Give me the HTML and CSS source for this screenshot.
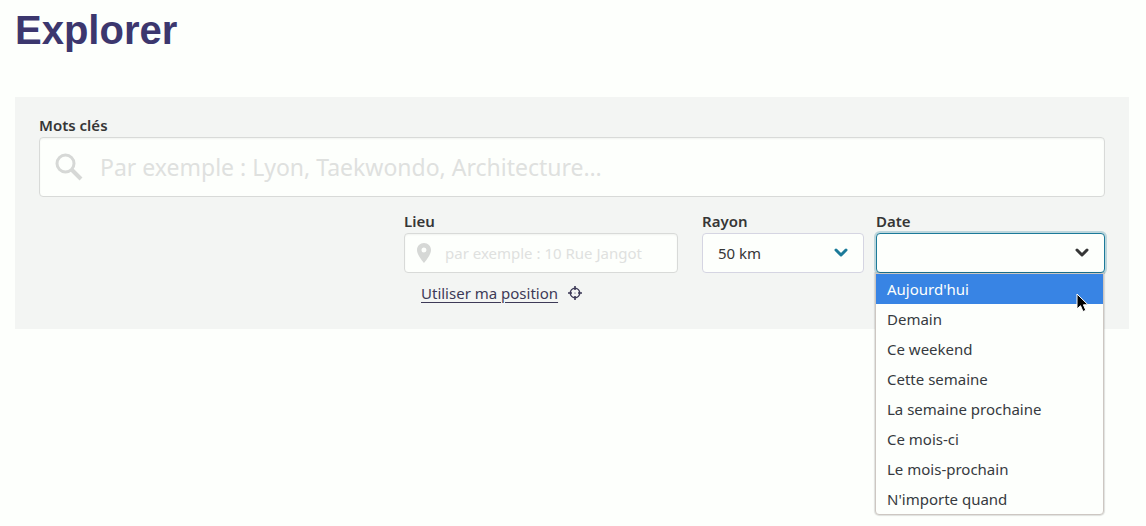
FILE: index.html
```html
<!DOCTYPE html>
<html lang="fr">
<head>
    <meta charset="UTF-8">
    <meta name="viewport" content="width=device-width, initial-scale=1.0">
    <title>Explorer</title>
    <link rel="stylesheet" href="styles.css">
</head>
<body>
    <main class="page">
        <h1 class="page-title">Explorer</h1>

        <form class="search-panel">
            <div class="field">
                <label for="keywords">Mots clés</label>
                <div class="control control-large">
                    <svg class="control-icon" viewBox="0 0 28 28" width="28" height="28" aria-hidden="true">
                        <circle cx="10.500" cy="10.500" r="8.500" fill="none" stroke="currentColor" stroke-width="3"/>
                        <path d="M16.500 16.500L26 26" fill="none" stroke="currentColor" stroke-width="4"/>
                    </svg>
                    <input type="search" id="keywords" placeholder="Par exemple : Lyon, Taekwondo, Architecture…">
                </div>
            </div>

            <div class="filters">
                <div class="field field-place">
                    <label for="place">Lieu</label>
                    <div class="control">
                        <svg class="control-icon" viewBox="0 0 14 20" width="14" height="20" aria-hidden="true">
                            <path fill="currentColor" fill-rule="evenodd" d="M7 0C3.100 0 0 3.100 0 7c0 5.200 7 13 7 13s7-7.800 7-13c0-3.900-3.100-7-7-7zm0 9.500a2.500 2.500 0 1 1 0-5 2.500 2.500 0 0 1 0 5z"/>
                        </svg>
                        <input type="text" id="place" placeholder="par exemple : 10 Rue Jangot">
                    </div>
                    <button type="button" class="locate-btn">
                        <span class="locate-text">Utiliser ma position</span>
                        <svg viewBox="0 0 14 14" width="14" height="14" aria-hidden="true">
                            <circle cx="7" cy="7" r="4.700" fill="none" stroke="currentColor" stroke-width="1.500"/>
                            <path d="M7 0v4M7 10v4M0 7h4M10 7h4" stroke="currentColor" stroke-width="1.600"/>
                            <circle cx="7" cy="7" r=".6" fill="currentColor"/>
                        </svg>
                    </button>
                </div>

                <div class="field field-radius">
                    <label for="radius">Rayon</label>
                    <div class="select-wrap">
                        <select id="radius">
                            <option>50 km</option>
                        </select>
                        <svg class="chevron" viewBox="0 0 14 10" width="14" height="10" aria-hidden="true">
                            <path d="M2 2l5 5 5-5" fill="none" stroke="currentColor" stroke-width="3" stroke-linecap="round" stroke-linejoin="round"/>
                        </svg>
                    </div>
                </div>

                <div class="field field-date">
                    <label for="date">Date</label>
                    <div class="select-wrap is-open">
                        <select id="date">
                            <option value=""></option>
                        </select>
                        <svg class="chevron" viewBox="0 0 14 10" width="14" height="10" aria-hidden="true">
                            <path d="M2 2l5 5 5-5" fill="none" stroke="currentColor" stroke-width="3" stroke-linecap="round" stroke-linejoin="round"/>
                        </svg>
                        <ul class="options" role="listbox">
                            <li class="option active" role="option" aria-selected="true">Aujourd'hui
                                <svg class="cursor" viewBox="0 0 13 20" width="13" height="20" aria-hidden="true">
                                    <path d="M1 1v15l3.500-3.300L7 18.500l2.800-1.200L7.400 11.800H12z" fill="#000" stroke="#fff"/>
                                </svg>
                            </li>
                            <li class="option" role="option">Demain</li>
                            <li class="option" role="option">Ce weekend</li>
                            <li class="option" role="option">Cette semaine</li>
                            <li class="option" role="option">La semaine prochaine</li>
                            <li class="option" role="option">Ce mois-ci</li>
                            <li class="option" role="option">Le mois-prochain</li>
                            <li class="option" role="option">N'importe quand</li>
                        </ul>
                    </div>
                </div>
            </div>
        </form>
    </main>
</body>
</html>
```

FILE: styles.css
```css
* {
    box-sizing: border-box;
}
body {
    min-height: 100vh;
    margin: 0;
    background-color: #fdfffc;
    color: #363636;
    font-family: "Noto Sans", sans-serif;
    font-size: 15px;
    line-height: 24px;
}
.page {
    padding: 6px 17px 0 15px;
}
.page-title {
    margin: 0 0 43px;
    color: #3c376e;
    font-family: "Liberation Sans", Arial, sans-serif;
    font-size: 40px;
    font-weight: bold;
    line-height: 48px;
}
.search-panel {
    padding: 16px 24px 24px;
    background-color: #f3f5f3;
}
.field label {
    display: block;
    font-weight: 600;
}
.control {
    display: flex;
    align-items: center;
    gap: 14px;
    height: 40px;
    padding: 0 12px;
    border: 1px solid #d8dad8;
    border-radius: 4px;
    background-color: #fdfffc;
    box-shadow: inset 0 1px 2px rgba(10, 10, 10, 0.05);
}
.control-large {
    gap: 17px;
    height: 60px;
    padding: 0 15px;
    font-size: 23px;
    line-height: 36px;
}
.control-icon {
    flex: none;
    color: #d6d8d6;
}
.control input {
    flex: 1;
    min-width: 0;
    height: 100%;
    padding: 0;
    border: none;
    outline: none;
    background: none;
    color: inherit;
    font: inherit;
}
.control input::placeholder {
    color: #dfe1df;
    line-height: inherit;
    opacity: 1;
}
.filters {
    display: flex;
    justify-content: flex-end;
    margin-top: 12px;
}
.field-place {
    width: 274px;
    margin-right: 24px;
}
.field-radius {
    width: 162px;
    margin-right: 12px;
}
.field-date {
    width: 229px;
}
.locate-btn {
    display: flex;
    align-items: center;
    gap: 10px;
    margin-top: 8px;
    padding: 0 17px;
    border: none;
    background: none;
    color: #3d3a57;
    font: inherit;
    cursor: pointer;
}
.locate-text {
    text-decoration: underline;
    text-underline-offset: 3px;
}
.select-wrap {
    position: relative;
    color: #1b7a99;
}
.select-wrap select {
    display: block;
    width: 100%;
    height: 40px;
    padding: 0 40px 0 15px;
    border: 1px solid #d5d5e2;
    border-radius: 4px;
    outline: none;
    appearance: none;
    background-color: #fdfffc;
    color: #363636;
    font: inherit;
}
.chevron {
    position: absolute;
    top: 15px;
    right: 16px;
    pointer-events: none;
}
.is-open {
    color: #363636;
}
.is-open select {
    border-color: #1b7a99;
    box-shadow: 0 0 0 2px rgba(27, 122, 153, 0.25);
}
.options {
    position: absolute;
    top: 40px;
    left: -1px;
    right: 1px;
    margin: 0;
    padding: 0;
    border: 1px solid #cdc7c2;
    border-radius: 0 0 4px 4px;
    background-color: #fdfffc;
    box-shadow: 0 0 1px 1px rgba(0, 0, 0, 0.12);
    color: #363a40;
    list-style: none;
}
.option {
    position: relative;
    padding: 3px 11px;
}
.option.active {
    background-color: #3884e4;
    color: #fdfffc;
}
.cursor {
    position: absolute;
    top: 19px;
    right: 14px;
    z-index: 1;
}
```
